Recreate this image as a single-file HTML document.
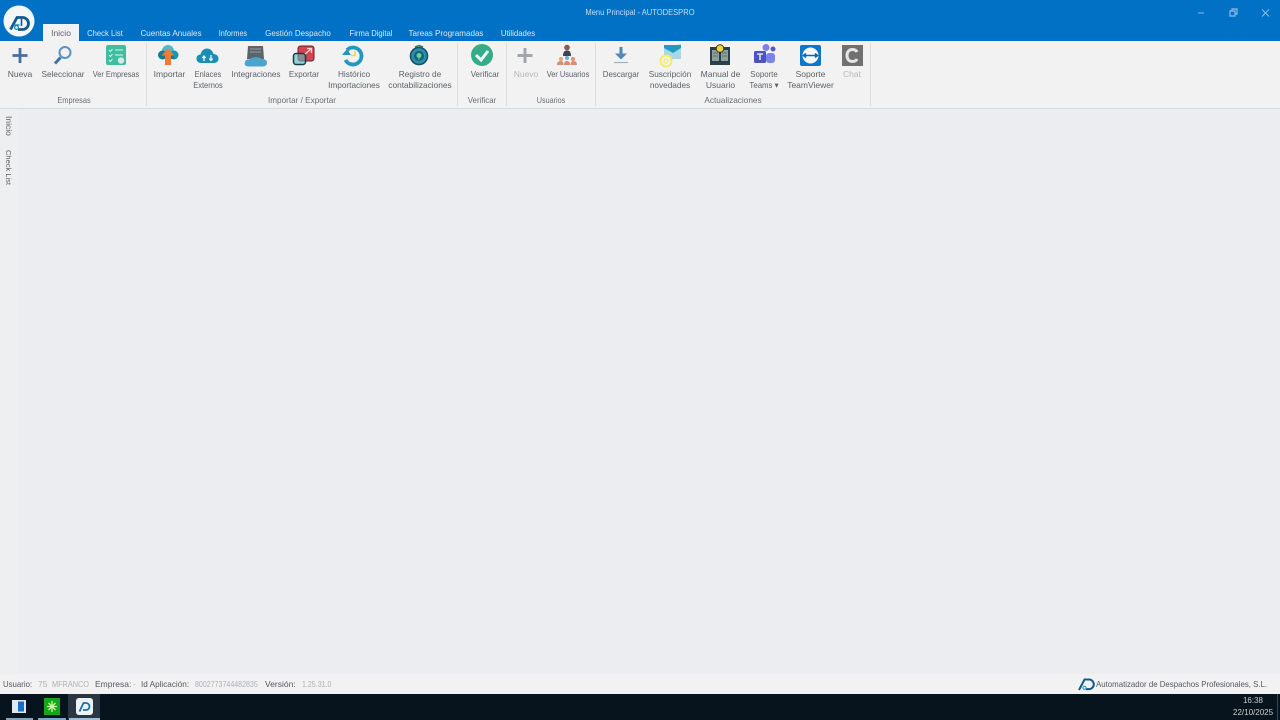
<!DOCTYPE html>
<html lang="es"><head><meta charset="utf-8"><title>Menu Principal - AUTODESPRO</title>
<style>
html,body{margin:0;padding:0;width:1280px;height:720px;overflow:hidden;background:#ebedf1}
body{font-family:"Liberation Sans",sans-serif;position:relative}
div,svg{position:absolute}
#w{left:0;top:0;width:1280px;height:720px;filter:blur(.3px)}
.t{font-size:8.5px;color:#5d6165;white-space:nowrap;text-align:center;transform:translateX(-50%) scaleX(var(--k,1));line-height:11px;top:69px}
.tab{top:28px;color:#dbe8f5;font-size:8.5px;line-height:11px;white-space:nowrap;transform:translateX(-50%) scaleX(var(--k,.93))}
.g{color:#6a6d70;top:95px}.d{color:#b5b7ba}
.sep{top:43px;width:1px;height:63px;background:#dcdddf}
.s{top:679px;font-size:8.5px;line-height:11px;color:#55585c;white-space:nowrap;transform-origin:0 50%;transform:scaleX(var(--k,1))}
.l{color:#aeb0b3}
</style></head><body><div id="w">
<div style="left:0;top:0;width:1280px;height:41px;background:#0071c5"></div>
<div style="left:0;top:7px;width:1280px;text-align:center;color:#c9def2;font-size:8.5px;line-height:11px;transform:scaleX(.89)">Menu Principal - AUTODESPRO</div>
<svg style="left:1190px;top:4px" width="85" height="18" viewBox="0 0 85 18" fill="none" stroke="#8fbde6"><path d="M8 9h6"/><path d="M40 7h5v5h-5zM42 7V5h5v5h-2" stroke-width="1.200"/><path d="M72 5.500l7 7M79 5.500l-7 7"/></svg>
<svg style="left:0;top:0" width="42" height="42" viewBox="0 0 42 42" fill="none"><circle cx="19" cy="21" r="15.500" fill="#f3f7f9"/><path d="M10.500 29.500L17 17.500h5.500a6 6 0 0 1 0 12H18" stroke="#125a8c" stroke-width="2.800"/><path d="M21.500 19v7" stroke="#125a8c" stroke-width="1.600"/><path d="M13.500 25h6" stroke="#1c86b4" stroke-width="1.400"/><circle cx="16.500" cy="27.500" r="1.900" stroke="#1c86b4" stroke-width="1.300" fill="#f3f7f9"/></svg>
<div style="left:43px;top:24px;width:36px;height:17px;background:#f2f2f3"></div>
<div class="tab" style="left:61px;top:28px;color:#5f6367;--k:1">Inicio</div>
<div class="tab" style="left:105px;--k:.9">Check List</div>
<div class="tab" style="left:170.500px;--k:.95">Cuentas Anuales</div>
<div class="tab" style="left:232.500px;--k:.86">Informes</div>
<div class="tab" style="left:298px;--k:.94">Gestión Despacho</div>
<div class="tab" style="left:370.500px;--k:.9">Firma Digital</div>
<div class="tab" style="left:445.500px;--k:.95">Tareas Programadas</div>
<div class="tab" style="left:517.500px;--k:.92">Utilidades</div>

<div style="left:0;top:41px;width:1280px;height:67px;background:#f2f2f3;border-bottom:1px solid #d9dadc"></div>
<div class="sep" style="left:146px"></div><div class="sep" style="left:457px"></div><div class="sep" style="left:506px"></div><div class="sep" style="left:595px"></div><div class="sep" style="left:870px"></div>

<svg style="left:0;top:41px" width="880" height="30" viewBox="0 41 880 30" fill="none">
<path d="M20 48v15M12.500 55.500h15" stroke="#44709f" stroke-width="2.800"/>
<circle cx="65" cy="52.500" r="5.500" stroke="#5b93c5" stroke-width="2"/><path d="M60.500 57.500l-5.500 6" stroke="#3f729f" stroke-width="3"/>
<rect x="106" y="45" width="20" height="20" rx="2" fill="#3ebd9f"/><path d="M109 50l1.500 1.500 2-2.500M109 55l1.500 1.500 2-2.500M109 60l1.500 1.500 2-2.500M115 50h8M115 55h8" stroke="#dff5ef"/><circle cx="121" cy="60.500" r="3.200" fill="#d7e8ea"/>
<circle cx="168" cy="51" r="6" fill="#48bccf"/><circle cx="162.500" cy="55" r="4.500" fill="#0f7f95"/><circle cx="174" cy="55" r="4.500" fill="#1a96ac"/><path d="M161 55h13v4h-13z" fill="#0f7f95"/><path d="M168 48l-6.500 7.500h3.500V65h6v-9.500h3.500z" fill="#f47a31"/>
<path d="M201 63c-3 0-4.500-2-4.500-4.500 0-2.500 2-4 4-4 1-4 3.500-6 6.500-6s5.500 2 6.500 5.500c3 0 5 2 5 4.500 0 3-2 4.500-5 4.500z" fill="#1a8eb4"/><path d="M204 61v-4.500M202.300 58l1.700-2 1.700 2M211 55v5M209.300 58.500l1.700 2 1.700-2" stroke="#f0f8fb" stroke-width="1.300"/>
<path d="M248 46h15l1 13h-17z" fill="#5b636c"/><path d="M250 49h11M250 52h11" stroke="#959ca4"/><path d="M249 66.500c-4 0-5-2-4-4.200 0-2 2-3 4-2.800 3-3 10-3 13-.5 3 0 5 1.300 5 3.800 0 2.400-2 3.700-4 3.700z" fill="#4aa4cc"/>
<rect x="298" y="46" width="16" height="15" rx="2.500" fill="#d5444f" stroke="#5a2730"/><rect x="293.500" y="53.500" width="12" height="11" rx="2.500" fill="#5bb9c0" fill-opacity=".6" stroke="#123d45" stroke-width="1.500"/><path d="M305 54l6-5M307 48.500h4.500V53" stroke="#f7d4d4" stroke-width="1.300"/>
<path d="M347 50a8.500 8.500 0 1 1-1.500 10" stroke="#2198c0" stroke-width="3.800"/><path d="M342 55l5-6 4 6z" fill="#2198c0"/><path d="M355 51v4.500h-4" stroke="#f0d83c" stroke-width="1.600"/>
<circle cx="419" cy="56" r="8.500" fill="#2b8eab" stroke="#14526b" stroke-width="1.600"/><circle cx="419" cy="56" r="5" fill="#175f77"/><circle cx="419" cy="55.500" r="2.500" fill="#62d49c"/><path d="M419 57v3" stroke="#62d49c"/><path d="M415 47l4-1.500 4 1.500" stroke="#2f7f5a" stroke-width="1.500"/>
<circle cx="482" cy="55" r="11" fill="#35ac88"/><path d="M476 55l5 5 7-9" stroke="#eef8f4" stroke-width="3"/>
<path d="M525 48v15M517.500 55.500h15" stroke="#a3a5a7" stroke-width="3"/>
<circle cx="567" cy="47.500" r="2.800" fill="#7b5f50"/><path d="M563 56c0-4 1.500-5.500 4-5.500s4 1.500 4 5.500z" fill="#3c4450"/><circle cx="561" cy="59" r="2" fill="#e3a778"/><circle cx="567" cy="58" r="2" fill="#6fb0d3"/><circle cx="573" cy="59" r="2" fill="#e88c7a"/><path d="M557 65c0-3 1.500-4 3.500-4s3 1 3 4zM564 65c0-3 1-4 3-4s3 1 3 4zM570.500 65c0-3 1-4 3-4s3.500 1 3.500 4z" fill="#d98e73"/>
<path d="M621 47v10" stroke="#4f88bb" stroke-width="3"/><path d="M615 53.500h12l-6 6z" fill="#4f88bb"/><path d="M614 62.500h14" stroke="#9fb2c2" stroke-width="1.200"/>
<path d="M664 48l17-4v15h-17z" fill="#a9d7ea"/><path d="M664 45h17v3l-8 5-9-5z" fill="#1f9ac0"/><circle cx="666" cy="61" r="5.500" fill="#f2f2f3" stroke="#f2ec6a" stroke-width="2"/><circle cx="666" cy="61" r="2" stroke="#f2ec6a" stroke-width="1.400"/>
<path d="M710 47h20v18h-20z" fill="#28404b"/><path d="M712 50h7v11h-7zM721 50h7v11h-7z" fill="#8e9f98"/><path d="M713 53h5M713 56h5M722 53h5M722 56h5" stroke="#5d6f70"/><circle cx="720" cy="48.500" r="3.800" fill="#f2d739" stroke="#333"/>
<rect x="754" y="51" width="12" height="12" rx="1.500" fill="#4b53bc"/><rect x="766" y="53" width="9" height="10" rx="3" fill="#7b83eb"/><circle cx="766" cy="47.500" r="3.500" fill="#7b83eb"/><circle cx="773" cy="49" r="2.500" fill="#5059c9"/><path d="M757 54h6M760 54v6" stroke="#fff" stroke-width="1.300"/>
<rect x="800" y="45" width="21" height="21" rx="2" fill="#0e75c9"/><circle cx="810.500" cy="55.500" r="8" fill="#f5fafd"/><path d="M804 55.500h13M806 53.500l-2.500 2 2.500 2M815 53.500l2.500 2-2.500 2" stroke="#0e65b0" stroke-width="1.600"/>
<rect x="842" y="45" width="21" height="21" fill="#707071"/><path d="M857 52c-1-2-3-2.500-4.500-2.500-3.500 0-5.500 2.500-5.500 6s2 6 5.500 6c1.500 0 3.500-.5 4.500-2.500" stroke="#e6e6e6" stroke-width="3"/>
</svg>

<div class="t" style="left:20px">Nueva</div>
<div class="t" style="left:62.500px;--k:.97">Seleccionar</div>
<div class="t" style="left:116px;--k:.87">Ver Empresas</div>
<div class="t" style="left:169.500px">Importar</div>
<div class="t" style="left:208px;--k:.88">Enlaces<br>Externos</div>
<div class="t" style="left:256px;--k:.96">Integraciones</div>
<div class="t" style="left:304px;--k:.94">Exportar</div>
<div class="t" style="left:354px;--k:.97">Histórico<br>Importaciones</div>
<div class="t" style="left:419.500px;--k:.98">Registro de<br>contabilizaciones</div>
<div class="t" style="left:485px;--k:.93">Verificar</div>
<div class="t d" style="left:526px">Nuevo</div>
<div class="t" style="left:568px;--k:.875">Ver Usuarios</div>
<div class="t" style="left:621px;--k:.93">Descargar</div>
<div class="t" style="left:670px;--k:.97">Suscripción<br>novedades</div>
<div class="t" style="left:720.500px">Manual de<br>Usuario</div>
<div class="t" style="left:764px;--k:.92">Soporte<br>Teams ▾</div>
<div class="t" style="left:810.500px">Soporte<br>TeamViewer</div>
<div class="t d" style="left:852px">Chat</div>

<div class="t g" style="left:73.500px;--k:.87">Empresas</div>
<div class="t g" style="left:301.500px;--k:.96">Importar / Exportar</div>
<div class="t g" style="left:482px;--k:.93">Verificar</div>
<div class="t g" style="left:551px;--k:.85">Usuarios</div>
<div class="t g" style="left:733px;--k:.97">Actualizaciones</div>

<div style="left:0;top:109px;width:18px;height:567px;background:#eeeff1"></div>
<div style="left:3px;top:116px;font-size:8.5px;line-height:11px;color:#5d6165;writing-mode:vertical-rl;white-space:nowrap">Inicio</div>
<div style="left:3px;top:150px;font-size:7.500px;line-height:11px;color:#5d6165;writing-mode:vertical-rl;white-space:nowrap">Check List</div>

<div style="left:0;top:674px;width:1280px;height:20px;background:#f2f2f3"></div>
<div class="s" style="left:3px;--k:.92">Usuario:</div>
<div class="s l" style="left:38px">75</div>
<div class="s l" style="left:52px;--k:.86">MFRANCO</div>
<div class="s" style="left:95px">Empresa:</div>
<div class="s l" style="left:133px">-</div>
<div class="s" style="left:141px;--k:.96">Id Aplicación:</div>
<div class="s l" style="left:195px;--k:.83">8002773744482835</div>
<div class="s" style="left:265px">Versión:</div>
<div class="s l" style="left:302px;--k:.83">1.25.31.0</div>
<svg style="left:1078px;top:677px" width="18" height="14" viewBox="0 0 18 14" fill="none"><path d="M1 13L6.500 2.500H11a4.800 4.800 0 0 1 0 9.600H8" stroke="#125a8c" stroke-width="2"/><circle cx="6.500" cy="10.800" r="1.600" stroke="#1d8fbb"/></svg>
<div class="s" style="left:1096px;--k:.924">Automatizador de Despachos Profesionales, S.L.</div>

<div style="left:0;top:694px;width:1280px;height:26px;background:#08141d"></div>
<div style="left:68px;top:694px;width:32px;height:26px;background:#2a3641"></div>
<div style="left:6px;top:718px;width:27px;height:2px;background:#7ea6c6"></div>
<div style="left:38px;top:718px;width:28px;height:2px;background:#7ea6c6"></div>
<div style="left:69px;top:718px;width:31px;height:2px;background:#9cc0dc"></div>
<svg style="left:12px;top:700px" width="14" height="13" viewBox="0 0 14 13"><rect width="14" height="13" fill="#dfe7ef"/><rect x="6" y="1.500" width="6" height="10" fill="#1c6cc6"/></svg>
<svg style="left:44px;top:698px" width="16" height="17" viewBox="0 0 16 17"><rect width="16" height="17" fill="#12a81a"/><path d="M8 3v11M3 8.500h10M4.500 5l7 7M11.500 5l-7 7" stroke="#c8f5a8" stroke-width="1.300"/></svg>
<svg style="left:76px;top:698px" width="17" height="17" viewBox="0 0 17 17" fill="none"><rect width="17" height="17" rx="3" fill="#eef2f5"/><path d="M3.500 13.500L7.500 5H10a3.500 3.500 0 0 1 0 7H7" stroke="#1a6fa5" stroke-width="1.800"/></svg>
<div style="left:1233px;top:695px;width:40px;text-align:center;color:#c9cfd4;font-size:8px;line-height:12px;white-space:nowrap">16:38<br>22/10/2025</div>
<div style="left:1277px;top:694px;width:1px;height:26px;background:#39434c"></div>
</div></body></html>
